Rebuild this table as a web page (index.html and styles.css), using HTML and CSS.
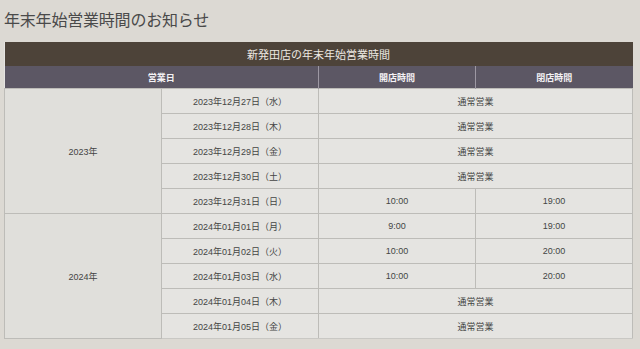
FILE: index.html
```html
<!DOCTYPE html>
<html lang="ja">
<head>
<meta charset="utf-8">
<link rel="stylesheet" href="styles.css">
</head>
<body>
<div class="page">
  <h1 class="title">年末年始営業時間のお知らせ</h1>
  <table class="hours">
    <colgroup><col><col><col><col></colgroup>
    <thead>
      <tr><th class="cap" colspan="4">新発田店の年末年始営業時間</th></tr>
      <tr class="head"><th colspan="2">営業日</th><th>開店時間</th><th>閉店時間</th></tr>
    </thead>
    <tbody>
      <tr><td class="year" rowspan="5">2023年</td><td>2023年12月27日（水）</td><td colspan="2">通常営業</td></tr>
      <tr><td>2023年12月28日（木）</td><td colspan="2">通常営業</td></tr>
      <tr><td>2023年12月29日（金）</td><td colspan="2">通常営業</td></tr>
      <tr><td>2023年12月30日（土）</td><td colspan="2">通常営業</td></tr>
      <tr><td>2023年12月31日（日）</td><td>10:00</td><td>19:00</td></tr>
      <tr><td class="year" rowspan="5">2024年</td><td>2024年01月01日（月）</td><td>9:00</td><td>19:00</td></tr>
      <tr><td>2024年01月02日（火）</td><td>10:00</td><td>20:00</td></tr>
      <tr><td>2024年01月03日（水）</td><td>10:00</td><td>20:00</td></tr>
      <tr><td>2024年01月04日（木）</td><td colspan="2">通常営業</td></tr>
      <tr><td>2024年01月05日（金）</td><td colspan="2">通常営業</td></tr>
    </tbody>
  </table>
</div>
</body>
</html>
```

FILE: styles.css
```css
html, body {
  margin: 0;
  padding: 0;
  background: #dcd9d3;
}
body {
  font-family: "Liberation Sans", "Noto Sans CJK JP", sans-serif;
  color: #454545;
}
.page {
  padding: 9px 7px 0 4px;
}
.title {
  margin: 0 0 13px 0;
  font-family: "Noto Sans CJK JP", sans-serif;
  font-size: 16px;
  font-weight: 400;
  line-height: 20px;
  color: #4a4a4a;
  letter-spacing: -0.2px;
}
.hours {
  width: 629px;
  border-collapse: collapse;
  table-layout: fixed;
  background: #e5e4e1;
}
.hours col {
  width: 25%;
}
.hours th, .hours td {
  padding: 0;
  text-align: center;
  vertical-align: middle;
  overflow: hidden;
  white-space: nowrap;
}
.cap {
  background: #4d4339;
  color: #ece8e2;
  font-family: "Noto Sans CJK JP", sans-serif;
  font-size: 11px;
  font-weight: 400;
  height: 24px;
}
.head th {
  background: #5c5764;
  color: #f4f2f5;
  font-family: "Noto Sans CJK JP", sans-serif;
  font-size: 9px;
  font-weight: 700;
  height: 22px;
  border-left: 1px solid #9d98a3;
}
.head th:first-child {
  border-left: none;
}
.hours td {
  font-size: 9px;
  height: 24px;
  border: 1px solid #bdbcb8;
  color: #444;
}
.hours td.year {
  background: #e0dfdb;
}
.hours tbody tr:last-child td {
  border-bottom: 1px solid #c9c8c4;
}
```
